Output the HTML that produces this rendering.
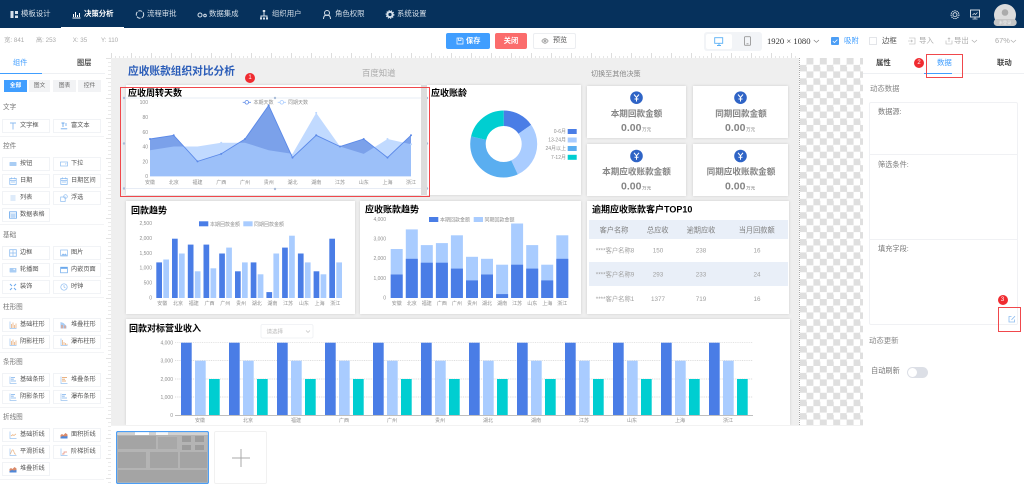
<!DOCTYPE html>
<html lang="zh-CN"><head><meta charset="utf-8"><title>决策分析</title>
<style>
*{box-sizing:border-box;margin:0;padding:0}
html,body{width:1024px;height:486px;overflow:hidden;background:#fff;font-family:"Liberation Sans","Noto Sans CJK SC",sans-serif}
#root{position:absolute;left:0;top:0;width:1024px;height:486px;filter:blur(.3px);overflow:hidden}
.a{position:absolute;white-space:nowrap}
#nav{left:0;top:0;width:1024px;height:28px;background:#06315c}
.n{position:absolute;top:9px;font-size:7.4px;line-height:10px;color:#d5dfe9;white-space:nowrap}
.i{position:absolute;overflow:visible}
.card{position:absolute;background:#fff;box-shadow:0 0 3px rgba(0,0,0,.14)}
.lab{position:absolute;left:3px;font-size:6.6px;line-height:8px;color:#777}
.hr{position:absolute;left:0;width:104px;height:1px;background:#f3f4f6}
.it{position:absolute;width:48px;height:14px;border:1px solid #f1f3f6;background:#fff;font-size:6.2px;line-height:12px;color:#555;padding-left:17px;white-space:nowrap}
.it svg{position:absolute;left:6px;top:2px;width:8px;height:8px}
.it.r{left:53px}.it.l{left:2px}
.chip{position:absolute;top:80px;height:12px;font-size:5.8px;line-height:12px;text-align:center;color:#666;background:#f2f3f5}
.rb{position:absolute;border:1.3px solid #f0484c}
.bd{position:absolute;width:10px;height:10px;border-radius:5px;background:#f02b30;color:#fff;font-size:6px;line-height:10px;text-align:center}
svg text{font-family:"Liberation Sans","Noto Sans CJK SC",sans-serif}
.ax{font-size:5px;fill:#8f8f8f}
.tt{font-size:9px;font-weight:700;fill:#000}
.ct{font-size:8.6px;font-weight:700;fill:#858585;text-anchor:middle}
.cv{font-size:10.5px;font-weight:700;fill:#858585}
.cu{font-size:4.6px;fill:#858585}
.th{font-size:7.2px;fill:#808080;text-anchor:middle}
.td{font-size:6.3px;fill:#a0a0a0;text-anchor:middle}
.m{text-anchor:middle}.e{text-anchor:end}
</style></head><body>
<div id="root">

<svg width="0" height="0" style="position:absolute">
<defs>
<symbol id="ib" viewBox="0 0 8 8"><path d="M1 .5v7h6.500" fill="none" stroke="#9cc4f0" stroke-width=".7"/><path d="M2.500 7V3M4 7V1.500M5.500 7V4M7 7V2.500" stroke="#e9b384" stroke-width=".8"/></symbol>
<symbol id="ih" viewBox="0 0 8 8"><path d="M1 .5v7h6.500" fill="none" stroke="#9cc4f0" stroke-width=".7"/><path d="M2 1.500h4M2 3.200h2.800M2 5h5" stroke="#9cc4f0" stroke-width="1.100"/></symbol>
<symbol id="il" viewBox="0 0 8 8"><path d="M1 .5v7h6.500" fill="none" stroke="#9cc4f0" stroke-width=".7"/><path d="M2 5l1.800-1.300L5 4.500l2-1.600" fill="none" stroke="#e9a76c" stroke-width=".7"/></symbol>
<symbol id="ia" viewBox="0 0 8 8"><path d="M.5 7.500h7V3.500L5.500 2 3.500 4 2 3 .5 4z" fill="#d98a6a"/><path d="M.5 7.500h7V5L5 5.500 3 5 .5 6z" fill="#4f87d8"/></symbol>
<symbol id="ic" viewBox="0 0 8 8"><rect x=".8" y="1.400" width="6.400" height="6" fill="none" stroke="#8dbcf0" stroke-width=".8"/><path d="M.8 3.400h6.400M2.400.5v1.600M5.600.5v1.600M2 5h4" stroke="#8dbcf0" stroke-width=".8"/></symbol>
<symbol id="ig" viewBox="0 0 8 8"><rect x=".7" y=".7" width="6.600" height="6.600" fill="none" stroke="#8dbcf0" stroke-width=".8"/><path d="M.7 4h6.600M4 .7v6.600" stroke="#8dbcf0" stroke-width=".7"/></symbol>
</defs>
</svg>

<div id="nav" class="a"></div>
<div class="a" style="left:61px;top:27px;width:63px;height:2px;background:#fff"></div>
<svg class="i" style="left:0;top:0" width="430" height="28" fill="none" stroke="#d6e0ea" stroke-width="1">
<path d="M10.500 11h3v7h-3zM15 11h3v3h-3zM15 15.500h3V18h-3z" fill="#d6e0ea" stroke="none"/>
<path d="M72.500 18h8M73.500 17v-3M75.500 17v-5M77.500 17v-2M79.500 17v-4" stroke="#fff"/>
<circle cx="140" cy="14.500" r="3.700" stroke-dasharray="4 1.200"/>
<circle cx="200" cy="15" r="2"/><circle cx="205" cy="15.500" r="1.300"/>
<path d="M264 11.500v3M261 18v-2h6v2M264 14.500v1.500"/><rect x="262.800" y="10" width="2.400" height="2" fill="#d6e0ea" stroke="none"/><rect x="260" y="17.500" width="2" height="2" fill="#d6e0ea" stroke="none"/><rect x="263" y="17.500" width="2" height="2" fill="#d6e0ea" stroke="none"/><rect x="266" y="17.500" width="2" height="2" fill="#d6e0ea" stroke="none"/>
<circle cx="327" cy="13" r="2.500"/><path d="M323.500 19c0-3 1.500-4 3.500-4s3.500 1 3.500 4"/>
<circle cx="390" cy="14.500" r="2.600" stroke-width="2"/><circle cx="390" cy="14.500" r="3.900" stroke-width="1" stroke-dasharray="1.200 1.200"/>
</svg>
<div class="n" style="left:21px">模板设计</div>
<div class="n" style="left:84px;color:#fff;font-weight:700">决策分析</div>
<div class="n" style="left:147px">流程审批</div>
<div class="n" style="left:209px">数据集成</div>
<div class="n" style="left:272px">组织用户</div>
<div class="n" style="left:335px">角色权限</div>
<div class="n" style="left:397px">系统设置</div>
<svg class="i" style="left:945px;top:4px" width="79" height="24" fill="none" stroke="#e4eaf0" stroke-width=".9">
<circle cx="10" cy="10.700" r="2"/><circle cx="10" cy="10.700" r="3.900" stroke-dasharray="1.300 .9" stroke-width="1.100"/>
<rect x="25.500" y="6" width="9" height="7"/><path d="M27.500 15h5M30 13v2M27.500 11l1.700-1.500 1.300 1 2-2" stroke-width=".7"/>
<circle cx="60" cy="11" r="11" fill="#dcdcdc" stroke="none"/>
<circle cx="60" cy="8.500" r="3.300" fill="#ababab" stroke="none"/>
<rect x="48.700" y="15" width="23" height="7" rx="3.500" fill="#c6c6c6" stroke="none"/>
<text x="60" y="20.200" font-size="4.200" fill="#f2f2f2" stroke="none" text-anchor="middle">未登录</text>
</svg>

<!-- toolbar -->
<div class="a" style="left:4.300px;top:37px;font-size:6.200px;line-height:8px;color:#aaa">宽: 841</div>
<div class="a" style="left:36px;top:37px;font-size:6.200px;line-height:8px;color:#aaa">高: 253</div>
<div class="a" style="left:72.700px;top:37px;font-size:6.200px;line-height:8px;color:#aaa">X: 35</div>
<div class="a" style="left:101px;top:37px;font-size:6.200px;line-height:8px;color:#aaa">Y: 110</div>
<div class="a" style="left:446px;top:33px;width:44px;height:16px;border-radius:2px;background:#409eff;color:#fff;font-size:7.200px;font-weight:700;line-height:16px;padding-left:20px">保存</div>
<svg class="i" style="left:456px;top:37px" width="8" height="8" fill="none" stroke="#fff" stroke-width=".7"><path d="M1 1h5l1 1v5H1zM2.500 1v2.500h2.500V1"/></svg>
<div class="a" style="left:495px;top:33px;width:32px;height:16px;border-radius:2px;background:#fb6c6c;color:#fff;font-size:7.200px;font-weight:700;line-height:16px;text-align:center">关闭</div>
<div class="a" style="left:533px;top:33px;width:43px;height:16px;border-radius:2px;border:1px solid #eceef1;color:#555;font-size:7px;line-height:14px;padding-left:19px">预览</div>
<svg class="i" style="left:541px;top:37px" width="8" height="8" fill="none" stroke="#888" stroke-width=".7"><path d="M.8 4c1.800-3 4.600-3 6.400 0-1.800 3-4.600 3-6.400 0z"/><circle cx="4" cy="4" r="1"/></svg>
<div class="a" style="left:704px;top:32px;width:58px;height:19px;border-radius:3px;background:#f2f4f7"></div>
<div class="a" style="left:706px;top:34px;width:26px;height:15px;border-radius:2px;background:#fff"></div>
<svg class="i" style="left:714px;top:37px" width="10" height="10" fill="none" stroke="#5ab0f5" stroke-width=".9"><rect x=".7" y=".7" width="8" height="5.600"/><path d="M3 8.500h4M5 6.300v2.200"/></svg>
<svg class="i" style="left:743px;top:36px" width="10" height="11" fill="none" stroke="#999" stroke-width=".9"><rect x="1.500" y=".7" width="6" height="8.600" rx=".8"/><path d="M3.500 7.800h2"/></svg>
<div class="a" style="left:767px;top:36px;font-size:8.600px;line-height:10px;color:#333;font-family:'Liberation Serif','Noto Serif CJK SC',serif">1920 × 1080</div>
<svg class="i" style="left:813px;top:39px" width="7" height="5" fill="none" stroke="#777" stroke-width=".6"><path d="M.8 1l2.600 2.400L6 1"/></svg>
<div class="a" style="left:831px;top:37px;width:8px;height:8px;border-radius:1px;background:#4c9ef5"></div>
<svg class="i" style="left:831px;top:37px" width="8" height="8" fill="none" stroke="#fff" stroke-width=".8"><path d="M1.800 4l1.600 1.600 3-3"/></svg>
<div class="a" style="left:844px;top:36px;font-size:7.400px;line-height:10px;color:#409eff">吸附</div>
<div class="a" style="left:869px;top:37px;width:8px;height:8px;border:1px solid #e3e5e9"></div>
<div class="a" style="left:882px;top:36px;font-size:7.400px;line-height:10px;color:#555">边框</div>
<svg class="i" style="left:908px;top:37px" width="8" height="8" fill="none" stroke="#b5b5b5" stroke-width=".6"><path d="M1 1h6v6H1M0 4h4.500M3 2.800L4.500 4 3 5.200"/></svg>
<div class="a" style="left:919px;top:36px;font-size:7.400px;line-height:10px;color:#aaa">导入</div>
<svg class="i" style="left:945px;top:37px" width="8" height="8" fill="none" stroke="#b5b5b5" stroke-width=".6"><path d="M1 3.500v3.500h6V3.500M4 5V.8M2.800 2L4 .8 5.200 2"/></svg>
<div class="a" style="left:954px;top:36px;font-size:7.400px;line-height:10px;color:#aaa">导出</div>
<svg class="i" style="left:971px;top:39px" width="7" height="5" fill="none" stroke="#aaa" stroke-width=".6"><path d="M.8 1l2.600 2.400L6 1"/></svg>
<div class="a" style="left:995px;top:36px;font-size:7.400px;line-height:10px;color:#aaa">67%</div>
<svg class="i" style="left:1010px;top:39px" width="7" height="5" fill="none" stroke="#aaa" stroke-width=".6"><path d="M.8 1l2.600 2.400L6 1"/></svg>

<!-- rulers -->
<div class="a" style="left:105px;top:52px;width:695px;height:6px;background:#fff"></div>
<div class="a" style="left:111px;top:55.500px;width:688px;height:2.500px;background:repeating-linear-gradient(90deg,#ccc 0 .6px,transparent .6px 4px)"></div>
<div class="a" style="left:111px;top:53px;width:688px;height:5px;background:repeating-linear-gradient(90deg,#bbb 0 .6px,transparent .6px 20px)"></div>
<div class="a" style="left:105px;top:58px;width:6px;height:428px;background:#fff"></div>
<div class="a" style="left:108px;top:58px;width:3px;height:428px;background:repeating-linear-gradient(180deg,#d4d4d4 0 .6px,transparent .6px 4px)"></div>
<div class="a" style="left:106px;top:58px;width:5px;height:428px;background:repeating-linear-gradient(180deg,#c4c4c4 0 .6px,transparent .6px 20px)"></div>

<!-- canvas -->
<div class="a" style="left:111px;top:58px;width:688px;height:367px;background:#efefef"></div>
<div class="a" style="left:800px;top:58px;width:63px;height:367px;background:repeating-conic-gradient(#dfdfdf 0 25%,#fff 0 50%) 0 0/13.400px 13.400px"></div>
<div class="a" style="left:799px;top:58px;width:1px;height:367px;border-left:1px dotted #aaa"></div>

<div class="card" style="left:126px;top:85px;width:295px;height:110px"></div>
<div class="card" style="left:427px;top:85px;width:154px;height:110px"></div>
<div class="card" style="left:587px;top:86px;width:99px;height:52px"></div>
<div class="card" style="left:693px;top:86px;width:95px;height:52px"></div>
<div class="card" style="left:587px;top:144px;width:99px;height:52px"></div>
<div class="card" style="left:693px;top:144px;width:95px;height:52px"></div>
<div class="card" style="left:126px;top:201px;width:229px;height:113px"></div>
<div class="card" style="left:360px;top:201px;width:221px;height:113px"></div>
<div class="card" style="left:587px;top:201px;width:202px;height:113px"></div>
<div class="card" style="left:126px;top:319px;width:664px;height:106px"></div>

<svg class="a" style="left:0;top:0" width="1024" height="425" viewBox="0 0 1024 425">
<text x="128" y="74.500" font-size="10.700" font-weight="700" fill="#2a5cb8">应收账款组织对比分析</text>
<text x="362" y="76" font-size="8.400" fill="#aaa">百度知道</text>
<text x="591" y="76" font-size="7.100" fill="#888">切换至其他决策</text>

<!-- chart 1 -->
<text class="tt" x="128" y="96">应收周转天数</text>
<g stroke="#dfe6f2" stroke-width=".8" fill="none"><path d="M124 98h303M124 188.500h303M124 98v90.500M427 98v90.500"/></g>
<g fill="#a9bcd8"><circle cx="275" cy="98" r="1.200"/><circle cx="124" cy="98" r="1.200"/><circle cx="427" cy="98" r="1.200"/><circle cx="124" cy="143.500" r="1.200"/><circle cx="427" cy="143.500" r="1.200"/><circle cx="124" cy="188.500" r="1.200"/><circle cx="275" cy="189" r="1.200"/><circle cx="427" cy="188.500" r="1.200"/></g>
<rect x="421" y="85" width="6" height="110" fill="#dcdcdc"/>
<polygon fill="#7ba1ea" points="150,176.300 150,139 173.700,135.300 197.500,161.400 221.200,153.900 245,139 268.700,105.400 292.500,157.600 316.200,135.300 340,146.500 363.700,139 387.500,157.600 411,135.300 411,176.300"/>
<polygon fill="#a9ccff" fill-opacity=".72" points="150,176.300 150,150.200 173.700,146.500 197.500,146.500 221.200,142.700 245,142.700 268.700,150.200 292.500,153.900 316.200,112.900 340,146.500 363.700,153.900 387.500,139 411,144.200 411,176.300"/>
<polyline fill="none" stroke="#5b89e8" stroke-width=".9" points="150,139 173.700,135.300 197.500,161.400 221.200,153.900 245,139 268.700,105.400 292.500,157.600 316.200,135.300 340,146.500 363.700,139 387.500,157.600 411,135.300"/>
<g fill="#5b89e8"><circle cx="150" cy="139" r="1"/><circle cx="173.700" cy="135.300" r="1"/><circle cx="197.500" cy="161.400" r="1"/><circle cx="221.200" cy="153.900" r="1"/><circle cx="245" cy="139" r="1"/><circle cx="268.700" cy="105.400" r="1"/><circle cx="292.500" cy="157.600" r="1"/><circle cx="316.200" cy="135.300" r="1"/><circle cx="340" cy="146.500" r="1"/><circle cx="363.700" cy="139" r="1"/><circle cx="387.500" cy="157.600" r="1"/><circle cx="411" cy="135.300" r="1"/></g>
<g fill="#bcd7ff"><circle cx="316.200" cy="112.900" r="1"/><circle cx="387.500" cy="139" r="1"/><circle cx="411" cy="144.200" r="1"/><circle cx="221.200" cy="142.700" r="1"/></g>
<text class="ax e" x="148" y="104">100</text><text class="ax e" x="148" y="119">80</text><text class="ax e" x="148" y="134">60</text><text class="ax e" x="148" y="148.500">40</text><text class="ax e" x="148" y="163.500">20</text><text class="ax e" x="148" y="178">0</text>
<text class="ax m" x="150" y="183.800">安徽</text><text class="ax m" x="173.700" y="183.800">北京</text><text class="ax m" x="197.500" y="183.800">福建</text><text class="ax m" x="221.200" y="183.800">广西</text><text class="ax m" x="245" y="183.800">广州</text><text class="ax m" x="268.700" y="183.800">贵州</text><text class="ax m" x="292.500" y="183.800">湖北</text><text class="ax m" x="316.200" y="183.800">湖南</text><text class="ax m" x="340" y="183.800">江苏</text><text class="ax m" x="363.700" y="183.800">山东</text><text class="ax m" x="387.500" y="183.800">上海</text><text class="ax m" x="411" y="183.800">浙江</text>
<path d="M242.700 102.300h8.300" stroke="#5b89e8" stroke-width=".8"/><circle cx="246.800" cy="102.300" r="1.800" fill="#fff" stroke="#5b89e8" stroke-width=".8"/>
<text class="ax" x="253.500" y="104">本期天数</text>
<path d="M277.700 102.300h8.300" stroke="#a9ccff" stroke-width=".8"/><circle cx="281.800" cy="102.300" r="1.800" fill="#fff" stroke="#a9ccff" stroke-width=".8"/>
<text class="ax" x="288" y="104">同期天数</text>

<!-- donut -->
<text class="tt" x="431" y="96">应收账龄</text>
<g transform="rotate(-90 503.700 144)" fill="none" stroke-width="15.500">
<circle cx="503.700" cy="144" r="25.750" stroke="#4a7de6" stroke-dasharray="24.700 161.800" stroke-dashoffset="0"/>
<circle cx="503.700" cy="144" r="25.750" stroke="#a9ccff" stroke-dasharray="44.900 161.800" stroke-dashoffset="-24.700"/>
<circle cx="503.700" cy="144" r="25.750" stroke="#5aaef0" stroke-dasharray="57.500 161.800" stroke-dashoffset="-69.600"/>
<circle cx="503.700" cy="144" r="25.750" stroke="#00ced1" stroke-dasharray="34.700 161.800" stroke-dashoffset="-127.100"/>
</g>
<rect x="567.700" y="129" width="9" height="5" fill="#4a7de6"/><rect x="567.700" y="137.500" width="9" height="5" fill="#a9ccff"/><rect x="567.700" y="146" width="9" height="5" fill="#5aaef0"/><rect x="567.700" y="154.800" width="9" height="5" fill="#00ced1"/>
<text class="ax e" x="566" y="133">0-6月</text><text class="ax e" x="566" y="141.500">13-24月</text><text class="ax e" x="566" y="150">24月以上</text><text class="ax e" x="566" y="158.800">7-12月</text>

<!-- stat cards -->
<g>
<circle cx="636.500" cy="97.700" r="6.300" fill="#2f64c6"/><circle cx="740.500" cy="97.700" r="6.300" fill="#2f64c6"/><circle cx="636.500" cy="156" r="6.300" fill="#2f64c6"/><circle cx="740.500" cy="156" r="6.300" fill="#2f64c6"/>
<g fill="none" stroke="#fff" stroke-width="1"><path d="M634 94.500l2.500 3 2.500-3M636.500 97.500v4M634.500 99h4"/><path d="M738 94.500l2.500 3 2.500-3M740.500 97.500v4M738.500 99h4"/><path d="M634 152.800l2.500 3 2.500-3M636.500 155.800v4M634.500 157.300h4"/><path d="M738 152.800l2.500 3 2.500-3M740.500 155.800v4M738.500 157.300h4"/></g>
<text class="ct" x="636.500" y="116.300">本期回款金额</text><text class="ct" x="741" y="116.300">同期回款金额</text>
<text class="ct" x="636.500" y="174.700">本期应收账款金额</text><text class="ct" x="741" y="174.700">同期应收账款金额</text>
<text class="cv" x="621" y="131">0.00</text><text class="cu" x="642" y="131">万元</text>
<text class="cv" x="725" y="131">0.00</text><text class="cu" x="746" y="131">万元</text>
<text class="cv" x="621" y="189.500">0.00</text><text class="cu" x="642" y="189.500">万元</text>
<text class="cv" x="725" y="189.500">0.00</text><text class="cu" x="746" y="189.500">万元</text>
</g>

<!-- chart 2 -->
<text class="tt" x="131" y="213.500">回款趋势</text>
<rect x="199" y="221.300" width="9.300" height="5" fill="#4a7de6"/><text class="ax" x="210" y="225.800">本期回款金额</text>
<rect x="243.300" y="221.300" width="9.300" height="5" fill="#a9ccff"/><text class="ax" x="254" y="225.800">同期回款金额</text>
<text class="ax e" x="152" y="225">2,500</text><text class="ax e" x="152" y="240">2,000</text><text class="ax e" x="152" y="254.800">1,500</text><text class="ax e" x="152" y="269.700">1,000</text><text class="ax e" x="152" y="284.500">500</text><text class="ax e" x="152" y="299.500">0</text>
<g transform="translate(0,298) scale(1,-1)" fill="#4a7de6">
<rect x="156.300" width="5.700" height="35.600"/><rect x="172" width="5.700" height="59.300"/><rect x="187.800" width="5.700" height="53.400"/><rect x="203.500" width="5.700" height="53.400"/><rect x="219.200" width="5.700" height="44.500"/><rect x="235" width="5.700" height="26.700"/><rect x="250.700" width="5.700" height="35.600"/><rect x="266.400" width="5.700" height="5.900"/><rect x="282.100" width="5.700" height="50.400"/><rect x="297.900" width="5.700" height="44.500"/><rect x="313.600" width="5.700" height="26.700"/><rect x="329.300" width="5.700" height="59.300"/>
</g>
<g transform="translate(0,298) scale(1,-1)" fill="#a9ccff">
<rect x="163.300" width="5.700" height="38.500"/><rect x="179" width="5.700" height="44.500"/><rect x="194.800" width="5.700" height="26.700"/><rect x="210.500" width="5.700" height="29.700"/><rect x="226.200" width="5.700" height="50.400"/><rect x="242" width="5.700" height="35.600"/><rect x="257.700" width="5.700" height="23.700"/><rect x="273.400" width="5.700" height="44.500"/><rect x="289.100" width="5.700" height="62.300"/><rect x="304.900" width="5.700" height="35.600"/><rect x="320.600" width="5.700" height="23.700"/><rect x="336.300" width="5.700" height="35.600"/>
</g>
<text class="ax m" x="162.300" y="305">安徽</text><text class="ax m" x="178" y="305">北京</text><text class="ax m" x="193.800" y="305">福建</text><text class="ax m" x="209.500" y="305">广西</text><text class="ax m" x="225.200" y="305">广州</text><text class="ax m" x="241" y="305">贵州</text><text class="ax m" x="256.700" y="305">湖北</text><text class="ax m" x="272.400" y="305">湖南</text><text class="ax m" x="288.100" y="305">江苏</text><text class="ax m" x="303.900" y="305">山东</text><text class="ax m" x="319.600" y="305">上海</text><text class="ax m" x="335.300" y="305">浙江</text>

<!-- chart 3 -->
<text class="tt" x="365" y="212.500">应收账款趋势</text>
<rect x="429" y="217" width="9.300" height="5" fill="#4a7de6"/><text class="ax" x="440" y="221.500">本期回款金额</text>
<rect x="473.700" y="217" width="9.300" height="5" fill="#a9ccff"/><text class="ax" x="484.500" y="221.500">同期回款金额</text>
<text class="ax e" x="386" y="220.800">4,000</text><text class="ax e" x="386" y="240.500">3,000</text><text class="ax e" x="386" y="260">2,000</text><text class="ax e" x="386" y="279.800">1,000</text><text class="ax e" x="386" y="299.500">0</text>
<g transform="translate(0,298) scale(1,-1)" fill="#a9ccff">
<rect x="390.700" width="12" height="49"/><rect x="405.800" width="12" height="68.600"/><rect x="420.800" width="12" height="52.900"/><rect x="435.900" width="12" height="54.900"/><rect x="450.900" width="12" height="62.700"/><rect x="466" width="12" height="41.200"/><rect x="481" width="12" height="39.200"/><rect x="496.100" width="12" height="33.300"/><rect x="511.100" width="12" height="74.500"/><rect x="526.200" width="12" height="52.900"/><rect x="541.200" width="12" height="33.300"/><rect x="556.300" width="12" height="62.700"/>
</g>
<g transform="translate(0,298) scale(1,-1)" fill="#4a7de6">
<rect x="390.700" width="12" height="23.500"/><rect x="405.800" width="12" height="39.200"/><rect x="420.800" width="12" height="35.300"/><rect x="435.900" width="12" height="35.300"/><rect x="450.900" width="12" height="29.400"/><rect x="466" width="12" height="17.600"/><rect x="481" width="12" height="23.500"/><rect x="496.100" width="12" height="3.900"/><rect x="511.100" width="12" height="33.300"/><rect x="526.200" width="12" height="29.400"/><rect x="541.200" width="12" height="17.600"/><rect x="556.300" width="12" height="39.200"/>
</g>
<text class="ax m" x="396.700" y="305">安徽</text><text class="ax m" x="411.800" y="305">北京</text><text class="ax m" x="426.800" y="305">福建</text><text class="ax m" x="441.900" y="305">广西</text><text class="ax m" x="456.900" y="305">广州</text><text class="ax m" x="472" y="305">贵州</text><text class="ax m" x="487" y="305">湖北</text><text class="ax m" x="502.100" y="305">湖南</text><text class="ax m" x="517.100" y="305">江苏</text><text class="ax m" x="532.200" y="305">山东</text><text class="ax m" x="547.200" y="305">上海</text><text class="ax m" x="562.300" y="305">浙江</text>

<!-- table -->
<text class="tt" x="592" y="212.500">逾期应收账款客户TOP10</text>
<rect x="589" y="220" width="199" height="19" fill="#e9eff8"/><rect x="589" y="262" width="199" height="24" fill="#e9eff8"/>
<text class="th" x="614" y="232.500">客户名称</text><text class="th" x="657.700" y="232.500">总应收</text><text class="th" x="701" y="232.500">逾期应收</text><text class="th" x="756.700" y="232.500">当月回款额</text>
<text class="td" x="615" y="252.500">****客户名称8</text><text class="td" x="658" y="252.500">150</text><text class="td" x="701" y="252.500">238</text><text class="td" x="757" y="252.500">16</text>
<text class="td" x="615" y="276.500">****客户名称9</text><text class="td" x="658" y="276.500">293</text><text class="td" x="701" y="276.500">233</text><text class="td" x="757" y="276.500">24</text>
<text class="td" x="615" y="301">****客户名称1</text><text class="td" x="658" y="301">1377</text><text class="td" x="701" y="301">719</text><text class="td" x="757" y="301">16</text>

<!-- chart 5 -->
<text class="tt" x="129" y="331.500">回款对标营业收入</text>
<rect x="261" y="324.500" width="52" height="13.500" rx="1.500" fill="#fff" stroke="#eef0f3" stroke-width=".8"/>
<text x="266.500" y="333.300" font-size="5.500" fill="#bbb">请选择</text>
<path d="M306 330.500l2 2 2-2" fill="none" stroke="#bbb" stroke-width=".6"/>
<g stroke="#d4d4d4" stroke-width=".7" stroke-dasharray="1 .8"><path d="M175 342.700h578M175 360.500h578M175 379h578M175 397h578"/></g>
<path d="M175 415.300h578" stroke="#999" stroke-width=".6"/>
<text class="ax e" x="173" y="344.500">4,000</text><text class="ax e" x="173" y="362.300">3,000</text><text class="ax e" x="173" y="380.800">2,000</text><text class="ax e" x="173" y="398.800">1,000</text><text class="ax e" x="173" y="416.800">0</text>
<g transform="translate(0,415) scale(1,-1)" fill="#4a7de6"><rect x="181" width="10.700" height="72.300"/><rect x="229" width="10.700" height="72.300"/><rect x="277" width="10.700" height="72.300"/><rect x="325" width="10.700" height="72.300"/><rect x="373" width="10.700" height="72.300"/><rect x="421" width="10.700" height="72.300"/><rect x="469" width="10.700" height="72.300"/><rect x="517" width="10.700" height="72.300"/><rect x="565" width="10.700" height="72.300"/><rect x="613" width="10.700" height="72.300"/><rect x="661" width="10.700" height="72.300"/><rect x="709" width="10.700" height="72.300"/></g>
<g transform="translate(0,415) scale(1,-1)" fill="#a9ccff"><rect x="195" width="10.700" height="54.300"/><rect x="243" width="10.700" height="54.300"/><rect x="291" width="10.700" height="54.300"/><rect x="339" width="10.700" height="54.300"/><rect x="387" width="10.700" height="54.300"/><rect x="435" width="10.700" height="54.300"/><rect x="483" width="10.700" height="54.300"/><rect x="531" width="10.700" height="54.300"/><rect x="579" width="10.700" height="54.300"/><rect x="627" width="10.700" height="54.300"/><rect x="675" width="10.700" height="54.300"/><rect x="723" width="10.700" height="54.300"/></g>
<g transform="translate(0,415) scale(1,-1)" fill="#00ced1"><rect x="209" width="10.700" height="36"/><rect x="257" width="10.700" height="36"/><rect x="305" width="10.700" height="36"/><rect x="353" width="10.700" height="36"/><rect x="401" width="10.700" height="36"/><rect x="449" width="10.700" height="36"/><rect x="497" width="10.700" height="36"/><rect x="545" width="10.700" height="36"/><rect x="593" width="10.700" height="36"/><rect x="641" width="10.700" height="36"/><rect x="689" width="10.700" height="36"/><rect x="737" width="10.700" height="36"/></g>
<text class="ax m" x="200" y="421.800">安徽</text><text class="ax m" x="248" y="421.800">北京</text><text class="ax m" x="296" y="421.800">福建</text><text class="ax m" x="344" y="421.800">广西</text><text class="ax m" x="392" y="421.800">广州</text><text class="ax m" x="440" y="421.800">贵州</text><text class="ax m" x="488" y="421.800">湖北</text><text class="ax m" x="536" y="421.800">湖南</text><text class="ax m" x="584" y="421.800">江苏</text><text class="ax m" x="632" y="421.800">山东</text><text class="ax m" x="680" y="421.800">上海</text><text class="ax m" x="728" y="421.800">浙江</text>
</svg>

<!-- red annotation -->
<div class="rb" style="left:120px;top:87px;width:310px;height:110px"></div>
<div class="bd" style="left:245px;top:73px">1</div>

<!-- bottom strip -->
<div class="a" style="left:111px;top:425px;width:752px;height:61px;background:#fff;border-top:1px solid #f2f2f2"></div>
<svg class="a" style="left:116px;top:431px" width="93" height="53" viewBox="116 431 93 53">
<rect x="117" y="432" width="91" height="51" fill="#b4b4b4"/>
<rect x="117" y="432" width="91" height="3" fill="#d2d2d2"/><rect x="135" y="432" width="14" height="3" fill="#fff"/><rect x="156" y="432" width="12" height="3" fill="#f6f6f6"/>
<rect x="118" y="436" width="38" height="13" fill="#a4a4a4"/><rect x="158" y="437" width="19" height="12" fill="#a8a8a8"/>
<rect x="182" y="436" width="9" height="6" fill="#9c9c9c"/><rect x="195" y="436" width="9" height="6" fill="#9c9c9c"/><rect x="182" y="445" width="9" height="5" fill="#9c9c9c"/><rect x="195" y="445" width="9" height="5" fill="#9c9c9c"/>
<rect x="118" y="452" width="28" height="16" fill="#a4a4a4"/><rect x="150" y="452" width="28" height="16" fill="#a4a4a4"/><rect x="180" y="452" width="27" height="16" fill="#a4a4a4"/>
<rect x="118" y="470" width="89" height="12" fill="#a4a4a4"/>
<rect x="116.500" y="431.500" width="92" height="52" rx="1.500" fill="none" stroke="#4c9ef5" stroke-width="1.200"/>
</svg>
<div class="a" style="left:214px;top:431px;width:53px;height:53px;border:1px solid #f1f1f1;border-radius:2px"></div>
<svg class="i" style="left:232px;top:449px" width="18" height="18" stroke="#aaa" stroke-width="1"><path d="M0 9h18M9 0v18"/></svg>

<!-- left panel -->
<div class="a" style="left:13px;top:58px;font-size:7.200px;line-height:10px;color:#409eff">组件</div>
<div class="a" style="left:77px;top:58px;font-size:7.200px;line-height:10px;color:#555;font-weight:700">图层</div>
<div class="a" style="left:0;top:73px;width:105px;height:1px;background:#eef0f3"></div>
<div class="a" style="left:0;top:73px;width:42px;height:1px;background:#409eff"></div>
<div class="chip" style="left:4px;width:23px;background:#409eff;color:#fff;font-weight:700">全部</div>
<div class="chip" style="left:29px;width:21px">图文</div>
<div class="chip" style="left:53px;width:23px">图表</div>
<div class="chip" style="left:78px;width:23px">控件</div>

<div class="lab" style="top:104px">文字</div>
<div class="it l" style="top:119px"><svg viewBox="0 0 8 8"><path d="M1 1h6M4 1v6.500" stroke="#8dbcf0" stroke-width=".9" fill="none"/></svg>文字框</div>
<div class="it r" style="top:119px"><svg viewBox="0 0 8 8"><path d="M1.500 1h3M3 1v4M.8 6.800h6.400" stroke="#6ba8ec" stroke-width=".9" fill="none"/><path d="M6 1v3" stroke="#6ba8ec" stroke-width=".8"/></svg>富文本</div>
<div class="hr" style="top:136px"></div>
<div class="lab" style="top:143px">控件</div>
<div class="it l" style="top:157px"><svg viewBox="0 0 8 8"><rect x=".5" y="2" width="7" height="4" rx=".6" fill="#a9cdf4"/></svg>按钮</div>
<div class="it r" style="top:157px"><svg viewBox="0 0 8 8"><rect x=".5" y="2" width="7" height="4" fill="none" stroke="#8dbcf0" stroke-width=".7"/><path d="M5 3.500h1.600L5.800 4.700z" fill="#8dbcf0"/></svg>下拉</div>
<div class="it l" style="top:174px"><svg><use href="#ic"/></svg>日期</div>
<div class="it r" style="top:174px"><svg><use href="#ic"/></svg>日期区间</div>
<div class="it l" style="top:191px"><svg viewBox="0 0 8 8"><path d="M1.500 2h5M1.500 4h5M1.500 6h5" stroke="#bcd7f5" stroke-width=".9"/></svg>列表</div>
<div class="it r" style="top:191px"><svg viewBox="0 0 8 8"><rect x=".7" y="3" width="4.500" height="4.500" fill="none" stroke="#8dbcf0" stroke-width=".7"/><circle cx="5.500" cy="2.500" r="1.800" fill="none" stroke="#8dbcf0" stroke-width=".7"/></svg>浮选</div>
<div class="it l" style="top:208px"><svg viewBox="0 0 8 8"><rect x=".5" y=".8" width="7" height="6.400" fill="none" stroke="#6ba8ec" stroke-width=".8"/><path d="M.5 3h7M.5 5h7M3 3v4M5 3v4" stroke="#6ba8ec" stroke-width=".5"/></svg>数据表格</div>
<div class="hr" style="top:224px"></div>
<div class="lab" style="top:232px">基础</div>
<div class="it l" style="top:246px"><svg><use href="#ig"/></svg>边框</div>
<div class="it r" style="top:246px"><svg viewBox="0 0 8 8"><rect x=".6" y="1" width="6.800" height="6" fill="none" stroke="#8dbcf0" stroke-width=".7"/><path d="M1 6.500l2-2 1.500 1 1-1 1.800 2z" fill="#8dbcf0"/></svg>图片</div>
<div class="it l" style="top:263px"><svg viewBox="0 0 8 8"><rect x=".6" y="2" width="6.800" height="4.500" rx=".6" fill="#a9cdf4"/><circle cx="5.200" cy="3.500" r=".7" fill="#fff"/></svg>轮播图</div>
<div class="it r" style="top:263px"><svg viewBox="0 0 8 8"><rect x=".6" y="1.200" width="6.800" height="5.600" fill="none" stroke="#6ba8ec" stroke-width=".7"/><rect x=".6" y="1.200" width="6.800" height="1.600" fill="#6ba8ec"/></svg>内嵌页面</div>
<div class="it l" style="top:280px"><svg viewBox="0 0 8 8"><path d="M1 1l2 2M7 7L5 5M7 1L5 3M1 7l2-2" stroke="#6ba8ec" stroke-width="1"/></svg>装饰</div>
<div class="it r" style="top:280px"><svg viewBox="0 0 8 8"><circle cx="4" cy="4" r="3.200" fill="none" stroke="#8dbcf0" stroke-width=".7"/><path d="M4 2v2l1.400 1" fill="none" stroke="#8dbcf0" stroke-width=".7"/></svg>时钟</div>
<div class="hr" style="top:297px"></div>
<div class="lab" style="top:304px">柱形图</div>
<div class="it l" style="top:318px"><svg><use href="#ib"/></svg>基础柱形</div>
<div class="it r" style="top:318px"><svg viewBox="0 0 8 8"><path d="M.5 7.500V1l3 1 3 3v2.500z" fill="#a9cdf4"/><path d="M2 7.500V4M5 7.500V4.500" stroke="#e59a7a" stroke-width="1.200"/></svg>堆叠柱形</div>
<div class="it l" style="top:335px"><svg><use href="#ib"/></svg>阴影柱形</div>
<div class="it r" style="top:335px"><svg viewBox="0 0 8 8"><path d="M1 .5v7h6.500" fill="none" stroke="#9cc4f0" stroke-width=".7"/><path d="M2.500 7V2M4 7V4M5.500 7V5M7 7V5.800" stroke="#e9b384" stroke-width=".8"/></svg>瀑布柱形</div>
<div class="hr" style="top:352px"></div>
<div class="lab" style="top:359px">条形图</div>
<div class="it l" style="top:373px"><svg><use href="#ih"/></svg>基础条形</div>
<div class="it r" style="top:373px"><svg viewBox="0 0 8 8"><path d="M1 .5v7h6.500" fill="none" stroke="#9cc4f0" stroke-width=".7"/><path d="M2 1.500h5M2 3.200h3M2 5h4" stroke="#e9b384" stroke-width="1"/></svg>堆叠条形</div>
<div class="it l" style="top:390px"><svg><use href="#ih"/></svg>阴影条形</div>
<div class="it r" style="top:390px"><svg><use href="#ih"/></svg>瀑布条形</div>
<div class="hr" style="top:407px"></div>
<div class="lab" style="top:414px">折线图</div>
<div class="it l" style="top:428px"><svg><use href="#il"/></svg>基础折线</div>
<div class="it r" style="top:428px"><svg><use href="#ia"/></svg>面积折线</div>
<div class="it l" style="top:445px"><svg viewBox="0 0 8 8"><path d="M1 .5v7h6.500" fill="none" stroke="#9cc4f0" stroke-width=".7"/><path d="M1.500 6C3 1 4 1 4.800 3.500S6 6.500 7 6" fill="none" stroke="#e9b384" stroke-width=".7"/></svg>平滑折线</div>
<div class="it r" style="top:445px"><svg viewBox="0 0 8 8"><path d="M1 .5v7h6.500" fill="none" stroke="#9cc4f0" stroke-width=".7"/><path d="M2 6h2V4h3" fill="none" stroke="#e58a7a" stroke-width=".7"/></svg>阶梯折线</div>
<div class="it l" style="top:462px"><svg><use href="#ia"/></svg>堆叠折线</div>
<div class="hr" style="top:479px"></div>

<!-- right panel -->
<div class="a" style="left:863px;top:52px;width:161px;height:434px;background:#fff"></div>
<div class="a" style="left:863px;top:73px;width:161px;height:1px;background:#eef0f3"></div>
<div class="a" style="left:924px;top:72.500px;width:28px;height:1px;background:#409eff"></div>
<div class="a" style="left:876px;top:58px;font-size:7.400px;line-height:10px;color:#444;font-weight:700">属性</div>
<div class="a" style="left:937px;top:58px;font-size:7.400px;line-height:10px;color:#409eff">数据</div>
<div class="a" style="left:997px;top:58px;font-size:7.400px;line-height:10px;color:#444;font-weight:700">联动</div>
<div class="rb" style="left:926px;top:54px;width:37px;height:24px"></div>
<div class="bd" style="left:914px;top:58px">2</div>
<div class="a" style="left:870px;top:84px;font-size:7.400px;line-height:10px;color:#888">动态数据</div>
<div class="a" style="left:869px;top:101.500px;width:149px;height:223px;border:1px solid #f0f1f4;border-radius:2px"></div>
<div class="a" style="left:869px;top:154px;width:149px;height:1px;background:#f0f1f4"></div>
<div class="a" style="left:869px;top:239px;width:149px;height:1px;background:#f0f1f4"></div>
<div class="a" style="left:878px;top:107px;font-size:7.200px;line-height:10px;color:#777">数据源:</div>
<div class="a" style="left:878px;top:160px;font-size:7.200px;line-height:10px;color:#777">筛选条件:</div>
<div class="a" style="left:878px;top:244px;font-size:7.200px;line-height:10px;color:#777">填充字段:</div>
<svg class="i" style="left:1008px;top:315px" width="8" height="8" fill="none" stroke="#8dbcf0" stroke-width=".8"><path d="M6.500 4.500v2.500H1V1.500h2.500M3.500 4.800l3.500-3.600"/></svg>
<div class="rb" style="left:998px;top:306.500px;width:23px;height:25px"></div>
<div class="bd" style="left:997.500px;top:295px">3</div>
<div class="a" style="left:869px;top:336px;font-size:7.400px;line-height:10px;color:#888">动态更新</div>
<div class="a" style="left:871px;top:366px;font-size:7.200px;line-height:10px;color:#777">自动刷新</div>
<div class="a" style="left:907px;top:367px;width:21px;height:11px;border-radius:5.500px;background:#dcdfe6"></div>
<div class="a" style="left:908px;top:368px;width:9px;height:9px;border-radius:5px;background:#fff"></div>
</div>
</body></html>
